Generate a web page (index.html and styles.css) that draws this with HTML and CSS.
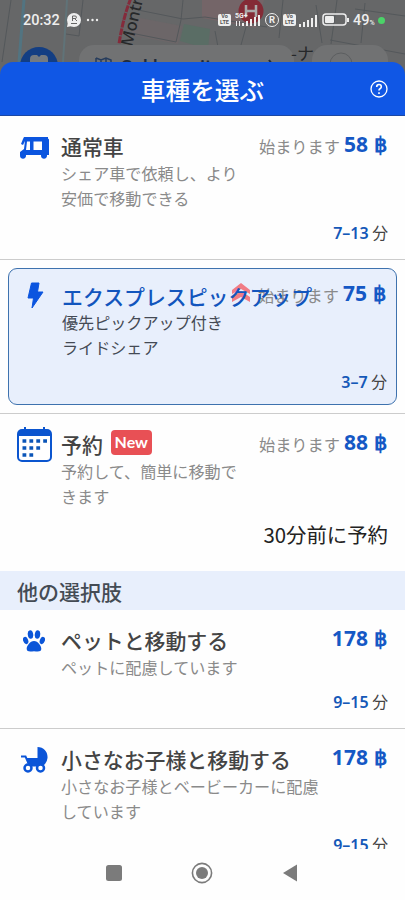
FILE: index.html
```html
<!DOCTYPE html>
<html lang="ja">
<head>
<meta charset="utf-8">
<meta name="viewport" content="width=device-width">
<title>車種を選ぶ</title>
<link rel="stylesheet" href="styles.css">
</head>
<body>
<div class="top">
  <svg class="map" width="405" height="76" viewBox="0 0 405 76">
    <rect width="405" height="76" fill="#666768"/>
    <path d="M202 0h62l-8 28-54-10z" fill="#746568"/>
    <path d="M140 18l42 8-4 18-48-9z" fill="#6c6668"/>
    <path d="M184 24l26 5-2 20-28-8z" fill="#5a6d65"/>
    <path d="M24 0l-5 62" stroke="#527481" stroke-width="3"/>
    <path d="M67 0l-4 62" stroke="#607378" stroke-width="2"/>
    <g fill="none" stroke="#54585b"><path d="M11 0L2 62M83 0l-4 36-13-2M138 10l45 9 22-2 62 10M183 0l-2 20-5 22-45-9M215 31l3 16M246 27l-5 18M283 0l-4 38M316 5l6 38M337 0l-6 44M365 3l-4 40M330 40l75 14M355 9l50 7"/></g>
    <path d="M131-2c-5 12-9 27-12 46" fill="none" stroke="#842b3b" stroke-width="3" stroke-dasharray="7 1"/>
    <text class="street" transform="translate(132 47) rotate(-77)">Montri</text>
    <circle cx="251" cy="11" r="12.500" fill="#842b36"/>
    <path d="M246 5v12M256 5v12M246 11h10" stroke="#aaa" stroke-width="2.500"/>
    <rect x="79" y="45" width="215" height="44" rx="15" fill="#717273"/>
    <rect x="312" y="45" width="76" height="44" rx="15" fill="#717273"/>
    <circle cx="39" cy="66" r="19" fill="#133e83"/>
    <path d="M30 70V59q0-4 4-4h3l2 2 2-2h3q4 0 4 4v11z" fill="#747a80"/>
    <path d="M96 58l5 2 5-2 5 2V72M96 58v12M101 60v12M106 58v12" fill="none" stroke="#263c5d" stroke-width="1.500"/>
    <text class="search" x="121" y="73">Sukhumvit</text>
    <path d="M269 60l3 4" stroke="#252a32" stroke-width="2"/>
    <circle cx="341" cy="64" r="11" fill="none" stroke="#5c5e60"/>
    <text class="place" x="291" y="60">-ナ</text>
  </svg>
  <div class="status">
    <span class="clock">20:32</span>
    <svg width="34" height="16" viewBox="0 0 34 16" fill="#eee"><circle cx="8" cy="8" r="7"/><path d="M2 10l-1 5 5-1z"/><path d="M6.500 9V4H9q1.500 0 1.500 1.300T9 6.500H6.500M8.500 6.500L11 9M5 11.500h6" stroke="#666" fill="none"/><circle cx="22" cy="8" r="1.200"/><circle cx="26.500" cy="8" r="1.200"/><circle cx="31" cy="8" r="1.200"/></svg>
    <span class="volte first">Vo<br>LTE</span>
    <svg class="net" width="27" height="16" viewBox="0 0 27 16" fill="#eee"><text class="tiny" x="0" y="6">5G+</text><path d="M1 14V9h1v5zM4 14V9h1v5zM7 14v-3h2v3zM11 14v-5h2v5zM15 14V7h2v7zM19 14V5h2v9zM23 14V3h2v11z"/></svg>
    <span class="reg">R</span>
    <span class="volte">Vo<br>LTE</span>
    <svg class="bars" width="18" height="13" viewBox="0 0 18 13" fill="#eee"><path d="M0 13v-3h2v3zM4 13V8h2v5zM8 13V6h2v7zM12 13V4h2v9zM16 13V1h2v12z"/></svg>
    <svg class="battery" width="28" height="14" viewBox="0 0 28 14"><rect x="1" y="1" width="23" height="11" rx="3" fill="none" stroke="#eee" stroke-width="1.500"/><rect x="3" y="3" width="9" height="7" rx="1" fill="#eee"/><path d="M26 5v4" stroke="#eee" stroke-width="2"/></svg>
    <span class="percent">49<small>%</small></span><i class="dot"></i>
  </div>
</div>
<header class="sheet-head">
  <h1>車種を選ぶ</h1>
  <svg class="help" width="18" height="18" viewBox="0 0 18 18" fill="none" stroke="#fff"><circle cx="9" cy="9" r="8" stroke-width="1.300"/><path d="M6.700 7q0-2.500 2.300-2.500T11.300 6.700Q11.300 8 10 8.700 9 9.300 9 10.500M9 12.200v1.700" stroke-width="1.600"/></svg>
</header>
<main class="list">
  <section class="option standard">
    <svg class="icon" width="31" height="24" viewBox="0 0 31 24" fill="#0b55df"><path fill-rule="evenodd" d="M5 1h24v1.500l1 1V19h-2a3 3 0 0 1-6 0H7a3 3 0 0 1-6 0L1 16l4-3 1-8-2 4-2-1 2-5zM8 5.500L7 14h4V5.500zM14.500 5.500V14H23V5.500z"/><circle cx="4" cy="20" r="2.700"/><circle cx="25" cy="20" r="2.700"/></svg>
    <h2>通常車</h2>
    <div class="price"><span>始まります</span><b>58 ฿</b></div>
    <p>シェア車で依頼し、より安価で移動できる</p>
    <div class="time"><b>7–13</b> 分</div>
  </section>
  <div class="frame">
    <section class="option express">
      <svg class="icon" width="18" height="27" viewBox="0 0 18 27" fill="#0b55df"><path d="M4.500 1H12l-1.500 9H16L5 26l1.500-10H1z" stroke="#0b55df" stroke-linejoin="round"/></svg>
      <h2>エクスプレスピックアップ</h2>
      <svg class="surge" width="20" height="20" viewBox="0 0 20 20" fill="#f17c85"><path d="M10 0l9 7v4l-9-5-9 5V7zM10 8l9 6v5l-9-5-9 5v-5z"/></svg>
      <div class="price"><span>始まります</span><b>75 ฿</b></div>
      <p>優先ピックアップ付き<br>ライドシェア</p>
      <div class="time"><b>3–7</b> 分</div>
    </section>
  </div>
  <section class="option reserve">
    <svg class="icon" width="35" height="35" viewBox="0 0 35 35"><rect x="1" y="3" width="33" height="31" rx="4" fill="#fff" stroke="#0b55cf" stroke-width="2"/><path d="M1 9V6q0-3 3-3h27q3 0 3 3v3zM7 0h2v5H7zM26 0h2v5h-2z" fill="#0b55cf"/><path d="M5.500 14h25M5.500 21h18M5.500 28h11" fill="none" stroke="#0b55b8" stroke-width="3.700" stroke-dasharray="3.800 3.100"/></svg>
    <h2>予約<span class="new">New</span></h2>
    <div class="price"><span>始まります</span><b>88 ฿</b></div>
    <p>予約して、簡単に移動できます</p>
    <div class="advance">30分前に予約</div>
  </section>
  <h3 class="group">他の選択肢</h3>
  <section class="option pet">
    <svg class="icon" width="22" height="22" viewBox="0 0 22 22" fill="#0b55d8"><ellipse cx="7.500" cy="4.500" rx="2.700" ry="4.200" transform="rotate(-8 7.500 4.500)"/><ellipse cx="14.500" cy="4.500" rx="2.700" ry="4.200" transform="rotate(8 14.500 4.500)"/><ellipse cx="2.700" cy="10.500" rx="2.500" ry="3.700" transform="rotate(-20 2.700 10.500)"/><ellipse cx="19.300" cy="10.500" rx="2.500" ry="3.700" transform="rotate(20 19.300 10.500)"/><path d="M11 11c4 0 7.500 5 7.300 8-.2 3-3.300 2.600-7.300 2.200C7 21.600 3.900 22 3.700 19c-.2-3 3.300-8 7.300-8z"/></svg>
    <h2>ペットと移動する</h2>
    <div class="price"><b>178 ฿</b></div>
    <p>ペットに配慮しています</p>
    <div class="time"><b>9–15</b> 分</div>
  </section>
  <section class="option child">
    <svg class="icon" width="27" height="26" viewBox="0 0 27 26"><path d="M16.500 0C23 0 27 5 26.500 11q-.5 5-5 8.500H8L5 11h11.500z" fill="#0b55d8"/><path d="M0 9.500h4.500l4 9" fill="none" stroke="#0b55d8" stroke-width="2"/><circle cx="7" cy="21" r="3.500" fill="#fff" stroke="#0b55d8" stroke-width="2.500"/><circle cx="19.500" cy="21" r="3.500" fill="#fff" stroke="#0b55d8" stroke-width="2.500"/></svg>
    <h2>小さなお子様と移動する</h2>
    <div class="price"><b>178 ฿</b></div>
    <p>小さなお子様とベービーカーに配慮しています</p>
    <div class="time"><b>9–15</b> 分</div>
  </section>
</main>
<nav class="keys">
  <svg width="16" height="16" viewBox="0 0 16 16"><rect width="16" height="16" rx="2.500" fill="#7b7b7b"/></svg>
  <svg width="22" height="22" viewBox="0 0 22 22"><circle cx="11" cy="11" r="9.600" fill="none" stroke="#7b7b7b" stroke-width="1.600"/><circle cx="11" cy="11" r="6" fill="#7b7b7b"/></svg>
  <svg width="16" height="18" viewBox="0 0 16 18"><path d="M15 .500v17L1 9z" fill="#7b7b7b"/></svg>
</nav>
</body>
</html>
```
FILE: styles.css
```css
* { box-sizing: border-box; }
body {
  margin: 0;
  width: 405px;
  height: 900px;
  display: flex;
  flex-direction: column;
  overflow: hidden;
  background: #fefefe;
  color: #444;
  font-family: "Noto Sans CJK JP", sans-serif;
}
h1, h2, h3, p { margin: 0; }
svg { display: block; flex: none; }

.top { height: 62px; flex: none; display: grid; }
.map, .status { grid-area: 1 / 1; }
.street { font: 500 16.5px "Noto Sans", sans-serif; fill: #26282a; }
.search { font: 500 19px Roboto, sans-serif; fill: #202b3c; }
.place { font: 17px "Noto Sans CJK JP", sans-serif; fill: #26282a; }
.status {
  z-index: 1;
  height: 40px;
  padding-left: 23px;
  display: flex;
  align-items: center;
  color: #eee;
  font-family: Roboto, sans-serif;
}
.clock { width: 43px; font-size: 14.5px; font-weight: 500; }
.volte {
  width: 13px;
  height: 12px;
  border-radius: 2px;
  background: #eee;
  color: #555;
  font-size: 5.5px;
  font-weight: 700;
  line-height: 5.5px;
  text-align: center;
}
.first { margin-left: 118px; }
.net { margin-left: 4px; }
.tiny { font: 700 7px Roboto, sans-serif; }
.reg {
  width: 14px;
  height: 14px;
  margin: 0 4px 0 3px;
  border: 1.3px solid #eee;
  border-radius: 50%;
  font-size: 9.5px;
  font-weight: 700;
  line-height: 11.5px;
  text-align: center;
}
.bars { margin-left: 3px; }
.battery { margin-left: 5px; }
.percent { margin-left: 3px; width: 23px; font-size: 14.5px; font-weight: 500; white-space: nowrap; }
.percent small { font-size: 7px; }
.dot { width: 7px; height: 7px; margin-left: 2px; border-radius: 50%; background: #4bd368; }

.sheet-head {
  z-index: 1;
  height: 54px;
  flex: none;
  display: grid;
  align-items: center;
  background: #1057e5;
  border-bottom: 1px solid #1c48a4;
  border-radius: 13px 13px 0 0;
  color: #fff;
}
.sheet-head h1 { grid-area: 1 / 1; text-align: center; font-size: 24.7px; font-weight: 500; line-height: 36px; padding-top: 1px; }
.help { grid-area: 1 / 1; justify-self: end; margin-right: 17px; }

.list { height: 733px; flex: none; overflow: hidden; }
.option {
  position: relative;
  display: grid;
  grid-template-columns: 61px 1fr 17px;
  grid-template-rows: 29px auto 1fr;
  border-bottom: 1px solid #ccc;
}
.standard { height: 144px; padding-top: 16px; }
.reserve { height: 157px; padding-top: 16px; }
.pet { height: 119px; padding-top: 16px; }
.child { height: 136px; padding-top: 16px; }
.icon { grid-area: 1 / 1; margin-left: 19px; }
.standard .icon { margin-top: 4px; }
.reserve .icon { margin: -3px 0 0 17px; }
.pet .icon { margin: 4px 0 0 23px; }
.child .icon { margin: 2px 0 0 21px; }
.option h2 {
  z-index: 1;
  grid-area: 1 / 2 / 2 / 4;
  display: flex;
  align-items: center;
  height: 28px;
  white-space: nowrap;
  color: #444;
  font-size: 20.9px;
  font-weight: 500;
  line-height: 28px;
}
.standard h2, .express h2, .child h2 { margin-top: -0.5px; }
.option p { grid-area: 2 / 2; width: 184px; color: #8a8a8a; font-size: 16.1px; line-height: 24.5px; }
.child p { width: 264px; }
.price { grid-area: 1 / 2; justify-self: end; align-self: start; display: flex; align-items: center; gap: 4px; height: 28px; line-height: 28px; white-space: nowrap; }
.price span { color: #8a8a8a; font-size: 16.2px; margin-top: -1px; }
.price b { margin-top: -5px; padding-right: 1px; color: #1558c5; font: 700 21px/24px "Noto Sans", "Open Sans", sans-serif; letter-spacing: 0.15px; }
.time { grid-area: 3 / 2; place-self: end; color: #444; font-size: 15.8px; line-height: 24px; padding-bottom: 14px; }
.time b { color: #1558b8; font: 600 16px "Noto Sans", sans-serif; }
.child .time { padding-bottom: 7px; }

.frame { height: 154px; padding: 8px 8px 9px; border-bottom: 1px solid #ccc; }
.express {
  height: 137px;
  padding-top: 13px;
  grid-template-columns: 53px 1fr 9px;
  grid-template-rows: 28px auto 1fr;
  border: 1px solid #3e72ae;
  border-radius: 9px;
  background: #e8effc;
}
.express .icon { margin-left: 18px; }
.express h2 { color: #1255bd; }
.express .price { margin-top: -1px; }
.express p { color: #444a54; }
.express .time { padding-bottom: 10px; }
.surge { position: absolute; left: 222px; top: 14px; }
.new {
  width: 41px;
  height: 25px;
  margin: -3px 0 0 8px;
  border-radius: 4px;
  background: #e85055;
  color: #fff;
  font: 700 16px/24px Lato, sans-serif;
  text-align: center;
}
.advance { grid-area: 3 / 2; place-self: end; color: #222; font-size: 20.4px; line-height: 30px; padding-bottom: 22px; }
.reserve { border-bottom: 0; }
.group {
  height: 39px;
  padding-left: 17px;
  background: #e8effc;
  color: #444b54;
  font-size: 21px;
  font-weight: 500;
  line-height: 40px;
}
.keys {
  flex: 1;
  padding: 0 107px 3px 106px;
  display: flex;
  align-items: center;
  justify-content: space-between;
  background: #fefefe;
}
```
